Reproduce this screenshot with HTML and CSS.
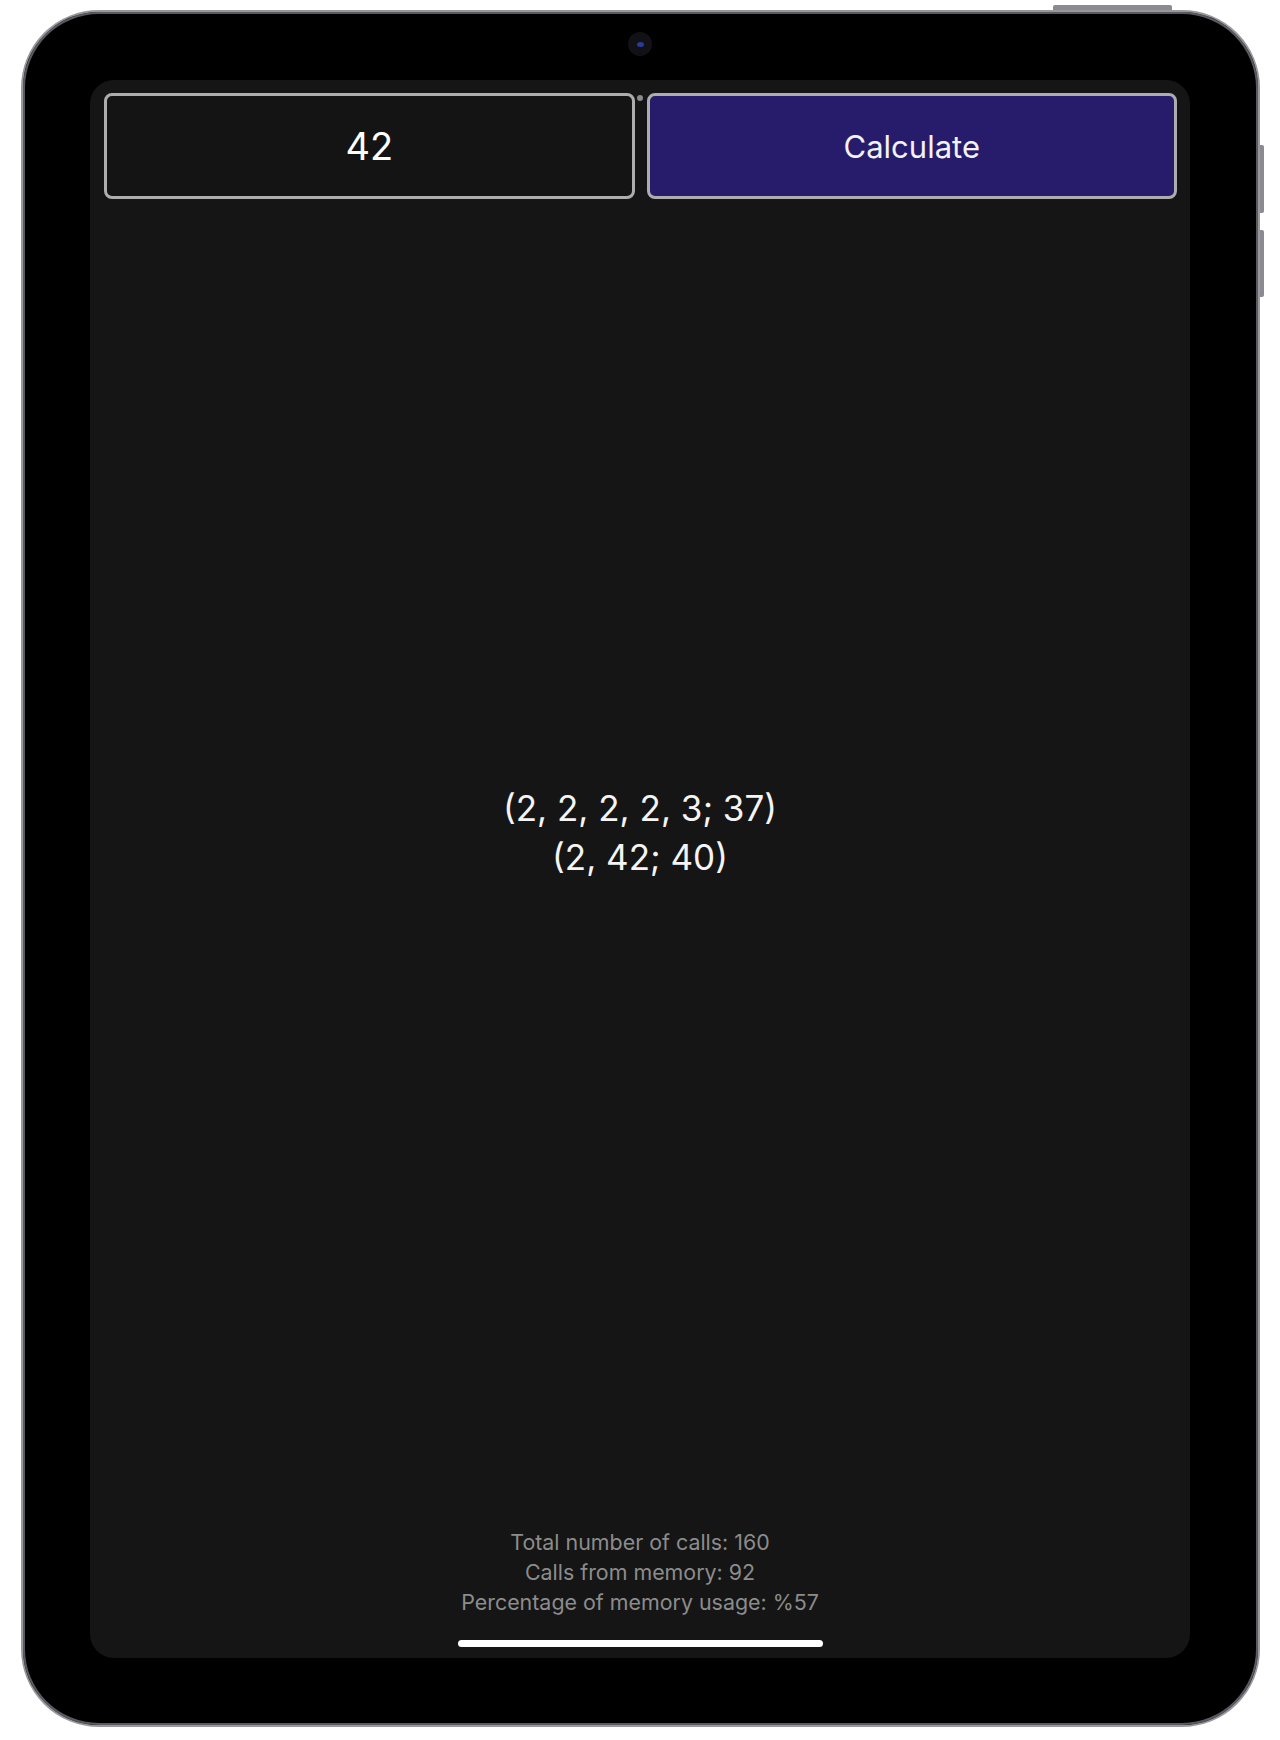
FILE: index.html
```html
<!DOCTYPE html>
<html lang="en">
<head>
<meta charset="utf-8">
<title>Calculator</title>
<link rel="stylesheet" href="styles.css">
</head>
<body>
<div class="device">
  <div class="top-key"></div>
  <div class="side-key side-key-1"></div>
  <div class="side-key side-key-2"></div>
  <div class="camera"><span class="lens"></span></div>
  <div class="screen">
    <div class="controls">
      <div class="field">42</div>
      <div class="button">Calculate</div>
      <span class="handle"></span>
    </div>
    <div class="result">
      <div class="result-lines">
        <div>(2, 2, 2, 2, 3; 37)</div>
        <div>(2, 42; 40)</div>
      </div>
    </div>
    <div class="stats">
      <div>Total number of calls: 160</div>
      <div>Calls from memory: 92</div>
      <div>Percentage of memory usage: %57</div>
    </div>
    <div class="home-bar"></div>
  </div>
</div>
</body>
</html>
```
FILE: styles.css
```css
* { box-sizing: border-box; }
html, body { margin: 0; padding: 0; background: #ffffff; }
body { font-family: Inter, "Noto Sans", "Liberation Sans", sans-serif; }

.device {
  position: relative;
  margin: 10px 0 0 21px;
  width: 1239px;
  height: 1717px;
  padding: 68px 68px 67px 67px;
  background: #000;
  border: 2px solid #98989e;
  border-radius: 78px;
  box-shadow: inset 0 0 0 2px #5a5a60;
}

.top-key {
  position: absolute;
  left: 1030px;
  top: -7px;
  width: 119px;
  height: 5px;
  background: #8a8a90;
  border-radius: 2px 2px 0 0;
}
.side-key {
  position: absolute;
  right: -6px;
  width: 4px;
  background: #8a8a90;
  border-radius: 0 2px 2px 0;
}
.side-key-1 { top: 133px; height: 68px; }
.side-key-2 { top: 218px; height: 67px; }

.camera {
  position: absolute;
  left: 605px;
  top: 20px;
  width: 24px;
  height: 24px;
  border-radius: 50%;
  background: #121216;
  display: flex;
  align-items: center;
  justify-content: center;
}
.lens {
  width: 7px;
  height: 5px;
  border-radius: 50%;
  background: #2a3c9a;
}

.screen {
  position: relative;
  width: 1100px;
  height: 1578px;
  background: #151515;
  border-radius: 24px;
  display: flex;
  flex-direction: column;
  color: #fff;
}

.controls {
  position: relative;
  display: flex;
  gap: 12px;
  padding: 13px 13px 0 14px;
}
.field, .button {
  flex: 1;
  height: 106px;
  border: 3px solid #adadad;
  border-radius: 8px;
  display: flex;
  align-items: center;
  justify-content: center;
}
.field {
  background: #141414;
  font-size: 38px;
  color: #fff;
}
.button {
  background: #271c6b;
  font-size: 31px;
  color: #f2f2f2;
}
.handle {
  position: absolute;
  left: 547px;
  top: 15px;
  width: 6px;
  height: 6px;
  border-radius: 50%;
  background: #8a8a8a;
}

.result {
  flex: 1;
  display: flex;
  align-items: center;
  justify-content: center;
  padding-bottom: 60px;
}
.result-lines {
  text-align: center;
  font-size: 35px;
  line-height: 49px;
  color: #f4f4f4;
}

.stats {
  text-align: center;
  font-size: 21.4px;
  line-height: 30px;
  color: #8c8c8c;
}

.home-bar {
  align-self: center;
  width: 365px;
  height: 7px;
  margin: 23px 0 11px;
  border-radius: 4px;
  background: #ffffff;
}
```
